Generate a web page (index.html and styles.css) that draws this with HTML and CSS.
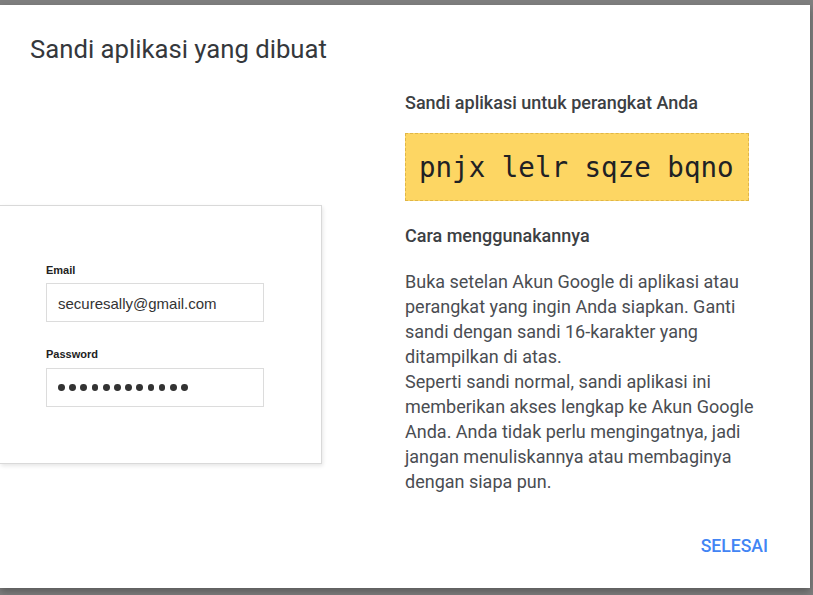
FILE: index.html
```html
<!DOCTYPE html>
<html lang="id">
<head>
<meta charset="utf-8">
<title>Sandi aplikasi yang dibuat</title>
<link rel="stylesheet" href="styles.css">
</head>
<body>
<div class="dialog">
  <h1 class="dialog-title">Sandi aplikasi yang dibuat</h1>
  <div class="dialog-body">
    <div class="illustration">
      <div class="login-card">
        <div class="field-label">Email</div>
        <div class="field-input">securesally@gmail.com</div>
        <div class="field-label field-label-second">Password</div>
        <div class="field-input field-dots">
          <span class="dot"></span><span class="dot"></span><span class="dot"></span><span class="dot"></span><span class="dot"></span><span class="dot"></span><span class="dot"></span><span class="dot"></span><span class="dot"></span><span class="dot"></span><span class="dot"></span><span class="dot"></span>
        </div>
      </div>
    </div>
    <div class="info">
      <h2 class="info-heading">Sandi aplikasi untuk perangkat Anda</h2>
      <div class="app-password">pnjx lelr sqze bqno</div>
      <h2 class="info-heading info-heading-second">Cara menggunakannya</h2>
      <p class="info-text">Buka setelan Akun Google di aplikasi atau perangkat yang ingin Anda siapkan. Ganti sandi dengan sandi 16-karakter yang ditampilkan di atas.<br>Seperti sandi normal, sandi aplikasi ini memberikan akses lengkap ke Akun Google Anda. Anda tidak perlu mengingatnya, jadi jangan menuliskannya atau membaginya dengan siapa pun.</p>
    </div>
  </div>
  <div class="dialog-actions">
    <button class="btn-done" type="button">SELESAI</button>
  </div>
</div>
</body>
</html>
```

FILE: styles.css
```css
html, body {
  margin: 0;
  padding: 0;
}

body {
  background: #7f7f7f;
  padding-top: 5px;
  height: 595px;
  box-sizing: border-box;
  overflow: hidden;
  font-family: Roboto, "Liberation Sans", sans-serif;
}

.dialog {
  width: 810px;
  height: 583px;
  background: #ffffff;
  box-shadow: 0 4px 8px rgba(0, 0, 0, 0.28);
  display: flex;
  flex-direction: column;
  box-sizing: border-box;
}

.dialog-title {
  margin: 0;
  padding: 28px 0 0 30px;
  font-size: 25.7px;
  line-height: 32px;
  font-weight: 400;
  color: #35383c;
}

.dialog-body {
  display: grid;
  grid-template-columns: 405px 365px;
  margin-top: 26px;
}

.illustration {
  padding-top: 114px;
}

.login-card {
  width: 322px;
  box-sizing: border-box;
  background: #ffffff;
  border: 1px solid #d9d9d9;
  border-left: none;
  box-shadow: 1px 2px 4px rgba(0, 0, 0, 0.10);
  padding: 57px 0 56px 46px;
  font-family: "Liberation Sans", Arial, sans-serif;
}

.field-label {
  font-size: 11px;
  line-height: 14px;
  font-weight: 700;
  color: #222222;
}

.field-label-second {
  margin-top: 25px;
}

.field-input {
  margin-top: 6px;
  width: 218px;
  height: 39px;
  box-sizing: border-box;
  border: 1px solid #dcdcdc;
  padding: 2px 0 0 11px;
  font-size: 15px;
  line-height: 35px;
  color: #333333;
}

.field-dots {
  margin-top: 7px;
  padding: 0 0 0 11px;
  display: flex;
  align-items: center;
  gap: 4.4px;
}

.dot {
  width: 6.8px;
  height: 6.8px;
  border-radius: 50%;
  background: #333333;
}

.info {
  display: flex;
  flex-direction: column;
  align-items: flex-start;
}

.info-heading {
  margin: 0;
  font-size: 18px;
  line-height: 24px;
  font-weight: 500;
  color: #3c4043;
}

.info-heading-second {
  margin-top: 23px;
}

.app-password {
  margin-top: 18px;
  background: #fdd663;
  border: 1px dashed #e0b647;
  padding: 15px 14px 15px 13px;
  font-family: "DejaVu Sans Mono", "Liberation Mono", monospace;
  font-size: 27.5px;
  line-height: 36px;
  color: #202124;
}

.info-text {
  margin: 21px 0 0;
  font-size: 18px;
  line-height: 25px;
  color: #4a4d52;
}

.dialog-actions {
  margin-top: auto;
  display: flex;
  justify-content: flex-end;
  padding: 0 42px 30px 0;
}

.btn-done {
  border: none;
  background: none;
  padding: 0;
  margin: 0;
  font-family: Roboto, "Liberation Sans", sans-serif;
  font-size: 17.6px;
  line-height: 24px;
  font-weight: 500;
  color: #4285f4;
  cursor: pointer;
}
```
